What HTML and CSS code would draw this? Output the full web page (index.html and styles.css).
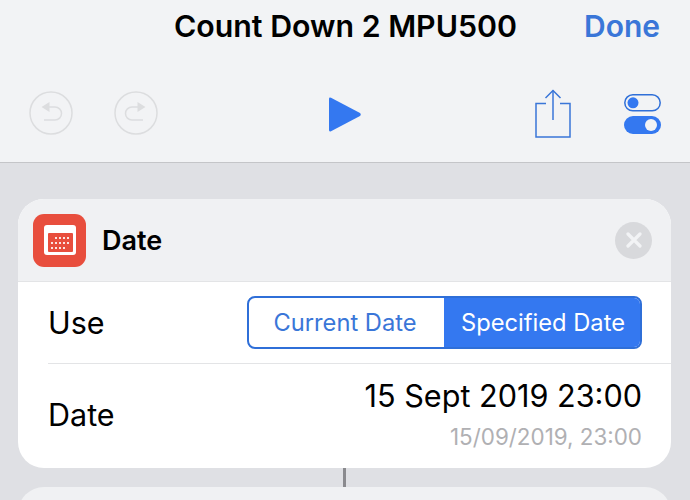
FILE: index.html
```html
<!DOCTYPE html>
<html lang="en">
<head>
    <meta charset="UTF-8">
    <meta name="viewport" content="width=device-width, initial-scale=1.0">
    <title>Count Down 2 MPU500</title>
    <link rel="stylesheet" href="styles.css">
</head>
<body>
    <header class="topbar">
        <div class="title-row">
            <h1 class="title">Count Down 2 MPU500</h1>
            <a class="done">Done</a>
        </div>
        <div class="tools">
            <div class="tools-left">
                <svg class="round-icon" width="44" height="44" viewBox="0 0 44 44" fill="none" stroke="#dcdddf" stroke-width="1.5">
                    <circle cx="22" cy="22" r="21"/>
                    <path d="M15 16H26a6.5 6.5 0 0 1 0 13H15"/>
                    <path d="M20.5 11L12.5 16L20.5 21Z" fill="#dcdddf" stroke="none"/>
                </svg>
                <svg class="round-icon" width="44" height="44" viewBox="0 0 44 44" fill="none" stroke="#dcdddf" stroke-width="1.5">
                    <circle cx="22" cy="22" r="21"/>
                    <path d="M29 16H18a6.5 6.5 0 0 0 0 13H29"/>
                    <path d="M23.5 11L31.5 16L23.5 21Z" fill="#dcdddf" stroke="none"/>
                </svg>
            </div>
            <svg class="play" width="32" height="35" viewBox="0 0 32 35">
                <path d="M0 2Q0 0 2 0.8L31 16Q32.5 17.5 31 19L2 34.2Q0 35 0 33Z" fill="#3478f0"/>
            </svg>
            <svg class="share" width="36" height="49" viewBox="0 0 36 49" fill="none" stroke="#3a76d8" stroke-width="1.5">
                <path d="M11 14.5H1V48H35V14.5H25"/>
                <path d="M18 1.5V31"/>
                <path d="M10.5 9L18 1.5L25.5 9"/>
            </svg>
            <svg class="toggles" width="37" height="40" viewBox="0 0 37 40">
                <rect x="0.8" y="0.8" width="35.4" height="16" rx="8" fill="none" stroke="#2f6fd8" stroke-width="1.5"/>
                <circle cx="9" cy="8.8" r="5.5" fill="#3478f0"/>
                <rect x="0" y="22" width="37" height="18" rx="9" fill="#3478f0"/>
                <circle cx="27" cy="31" r="6" fill="#f2f3f5"/>
            </svg>
        </div>
    </header>

    <main class="canvas">
        <section class="card">
            <div class="card-head">
                <div class="app-icon">
                    <svg width="32" height="30" viewBox="0 0 32 30">
                        <rect x="0" y="0" width="32" height="30" rx="3" fill="#fff"/>
                        <rect x="4" y="8" width="25" height="19" rx="1" fill="#e84e3d"/>
                        <g fill="#fff" opacity="0.85">
                            <rect x="11" y="12" width="2" height="2"/><rect x="15" y="12" width="2" height="2"/><rect x="19" y="12" width="2" height="2"/><rect x="23" y="12" width="2" height="2"/>
                            <rect x="7" y="17" width="2" height="2"/><rect x="11" y="17" width="2" height="2"/><rect x="15" y="17" width="2" height="2"/><rect x="19" y="17" width="2" height="2"/><rect x="23" y="17" width="2" height="2"/>
                            <rect x="7" y="22" width="2" height="2"/><rect x="11" y="22" width="2" height="2"/><rect x="15" y="22" width="2" height="2"/><rect x="19" y="22" width="2" height="2"/>
                        </g>
                    </svg>
                </div>
                <span class="card-title">Date</span>
                <span class="close">
                    <svg width="16" height="16" viewBox="0 0 16 16" stroke="#f2f3f5" stroke-width="3.2" stroke-linecap="round">
                        <path d="M2 2L14 14M14 2L2 14"/>
                    </svg>
                </span>
            </div>
            <div class="row row-use">
                <span class="label">Use</span>
                <div class="segment">
                    <span class="seg-item seg-off">Current Date</span>
                    <span class="seg-item seg-on">Specified Date</span>
                </div>
            </div>
            <div class="row row-date">
                <span class="label label-date">Date</span>
                <div class="date-value">
                    <div class="date-main">15 Sept 2019 23:00</div>
                    <div class="date-sub">15/09/2019, 23:00</div>
                </div>
            </div>
        </section>
        <div class="connector"></div>
        <section class="card card-next"></section>
    </main>
</body>
</html>
```

FILE: styles.css
```css
html, body {
    height: 100%;
}
body {
    margin: 0;
    overflow: hidden;
    font-family: Inter, "Liberation Sans", sans-serif;
    background-color: #dfe0e4;
    color: #000;
}
.topbar {
    height: 163px;
    box-sizing: border-box;
    background: #f2f3f5;
    border-bottom: 1px solid #c4c5c8;
}
.title-row {
    height: 52px;
    display: flex;
    align-items: center;
    justify-content: space-between;
    padding-left: 174px;
    padding-right: 30px;
}
.title {
    margin: 0;
    font-size: 30.3px;
    font-weight: 600;
}
.done {
    color: #3a76d8;
    font-size: 30px;
    font-weight: 600;
}
.tools {
    display: flex;
    align-items: center;
    height: 62px;
    margin-top: 31px;
    padding-left: 29px;
}
.tools-left {
    display: flex;
    gap: 41px;
    margin-bottom: 2px;
}
.play {
    margin-left: 171px;
}
.share {
    margin-left: 174px;
    margin-bottom: 1px;
}
.toggles {
    margin-left: 53px;
}
.canvas {
    padding: 36px 18px 0 18px;
}
.card {
    background: #fff;
    border-radius: 26px;
    overflow: hidden;
    width: 653px;
}
.card-head {
    height: 83px;
    box-sizing: border-box;
    display: flex;
    align-items: center;
    padding: 0 19px 0 15px;
    background: #f0f1f3;
    border-bottom: 1px solid #e3e4e6;
}
.app-icon {
    width: 53px;
    height: 53px;
    border-radius: 11px;
    background: #e84e3d;
    display: flex;
    align-items: center;
    justify-content: center;
}
.card-title {
    margin-left: 16px;
    font-size: 27px;
    font-weight: 600;
    flex: 1;
}
.close {
    width: 37px;
    height: 37px;
    border-radius: 50%;
    background: #d8d9dc;
    display: flex;
    align-items: center;
    justify-content: center;
}
.row {
    display: flex;
    align-items: center;
    justify-content: space-between;
    margin-left: 30px;
    padding-right: 29px;
}
.row-use {
    height: 81px;
    border-bottom: 1px solid #e3e4e6;
}
.row-date {
    height: 104px;
}
.label {
    font-size: 30.5px;
}
.label-date {
    margin-bottom: 3px;
}
.segment {
    display: flex;
    width: 395px;
    height: 53px;
    box-sizing: border-box;
    border: 2px solid #2f6fd8;
    border-radius: 8px;
    overflow: hidden;
}
.seg-item {
    flex: 1;
    display: flex;
    align-items: center;
    justify-content: center;
    font-size: 23.7px;
    color: #3a76d8;
}
.seg-off {
    padding-right: 3px;
}
.seg-on {
    flex: 0 0 196px;
    padding-left: 2px;
    box-sizing: border-box;
    background: #3478f0;
    color: #fff;
}
.date-value {
    text-align: right;
    margin-bottom: 6px;
}
.date-main {
    font-size: 30.6px;
}
.date-sub {
    margin-top: 9px;
    font-size: 22.4px;
    color: #b0b0b3;
}
.connector {
    width: 3px;
    height: 19px;
    margin-left: 325px;
    background: #8a8a8e;
}
.card-next {
    height: 60px;
    background: #f0f1f3;
}
```
